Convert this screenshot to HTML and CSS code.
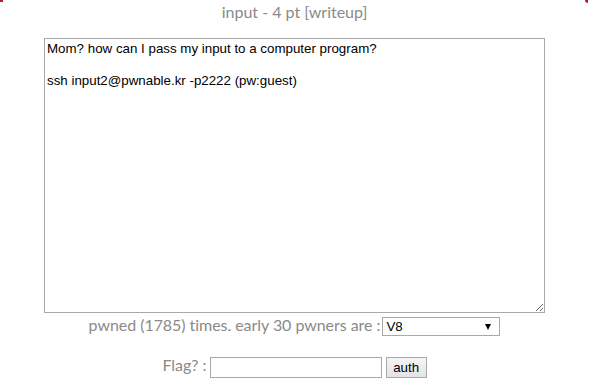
FILE: index.html
```html
<!DOCTYPE html>
<html>
<head>
<meta charset="utf-8">
<link rel="stylesheet" href="styles.css">
</head>
<body>
<span class="corner corner-left"></span>
<span class="corner corner-right"></span>
<div class="page">
  <div class="title">input - 4 pt [writeup]</div>
  <textarea class="desc" readonly>Mom? how can I pass my input to a computer program?

ssh input2@pwnable.kr -p2222 (pw:guest)
</textarea>
  <div class="row row-pwned">pwned (1785) times. early 30 pwners are :<span class="select-wrap"><select class="pwners"><option>V8</option></select></span></div>
  <div class="row row-flag">Flag? :<input class="flag" type="text"><button class="auth">auth</button></div>
</div>
</body>
</html>
```
FILE: styles.css
```css
html, body {
  margin: 0;
  padding: 0;
  background: #fff;
}
body {
  font-family: Lato, "Open Sans", sans-serif;
  color: #8a8a8a;
  font-size: 16px;
}
.corner {
  position: absolute;
  top: 0;
  width: 3px;
  height: 2px;
  background: #a8262a;
}
.corner-left { left: 0; }
.corner-right { left: 585px; height: 3px; border-radius: 0 0 0 3px; }
.page {
  display: flex;
  flex-direction: column;
  align-items: center;
}
.title {
  margin-top: 2px;
  height: 20px;
  line-height: 20px;
}
.desc {
  display: block;
  margin-top: 16px;
  width: 501px;
  height: 275px;
  box-sizing: border-box;
  border: 1px solid #a9a9a9;
  padding: 2px;
  font-family: "Liberation Sans", Arial, sans-serif;
  font-size: 13.33px;
  line-height: 16px;
  color: #000;
  resize: vertical;
}
.row {
  text-align: center;
  line-height: 20px;
}
.row-pwned {
  margin-top: 2px;
  letter-spacing: -0.05px;
}
.select-wrap {
  position: relative;
  display: inline-block;
  vertical-align: middle;
  margin-left: 2px;
}
.select-wrap::after {
  content: "";
  position: absolute;
  right: 9px;
  top: 7px;
  border-left: 3.5px solid transparent;
  border-right: 3.5px solid transparent;
  border-top: 6px solid #000;
  pointer-events: none;
}
.pwners {
  display: block;
  -webkit-appearance: none;
  appearance: none;
  width: 118px;
  height: 19px;
  box-sizing: border-box;
  border: 1px solid #a9a9a9;
  border-radius: 0;
  font-family: "Liberation Sans", Arial, sans-serif;
  font-size: 13.33px;
  letter-spacing: 0;
  color: #000;
  background: #fff;
  padding: 0 0 0 3px;
  margin: 0;
}
.row-flag {
  margin-top: 19px;
}
.flag {
  width: 172px;
  height: 21px;
  box-sizing: border-box;
  border: 1px solid #a9a9a9;
  border-radius: 0;
  padding: 1px 2px;
  margin: 0 0 0 3px;
  vertical-align: middle;
}
.auth {
  height: 21px;
  width: 41px;
  box-sizing: border-box;
  margin: 0 0 0 4px;
  padding: 0;
  border: 1px solid #a9a9a9;
  border-radius: 0;
  background: linear-gradient(#f5f5f5, #e3e3e3);
  font-family: "Liberation Sans", Arial, sans-serif;
  font-size: 13.33px;
  color: #000;
  vertical-align: middle;
}
```
